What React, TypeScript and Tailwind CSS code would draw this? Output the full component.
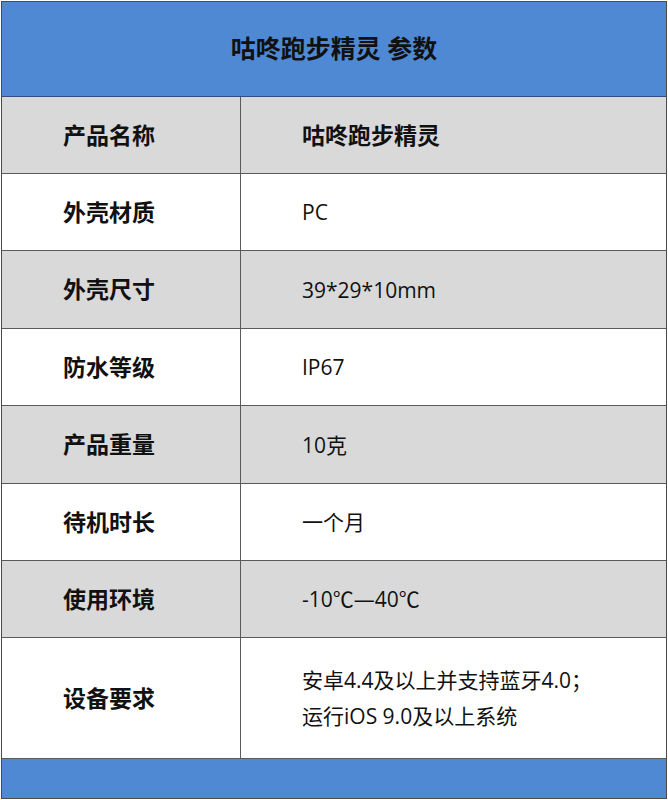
const rows: { label: string; value: string[]; bold?: boolean; h: string; gray: boolean }[] = [
  { label: '产品名称', value: ['咕咚跑步精灵'], bold: true, h: 'h-[77px]', gray: true },
  { label: '外壳材质', value: ['PC'], h: 'h-[77px]', gray: false },
  { label: '外壳尺寸', value: ['39*29*10mm'], h: 'h-[78px]', gray: true },
  { label: '防水等级', value: ['IP67'], h: 'h-[77px]', gray: false },
  { label: '产品重量', value: ['10克'], h: 'h-[78px]', gray: true },
  { label: '待机时长', value: ['一个月'], h: 'h-[77px]', gray: false },
  { label: '使用环境', value: ['-10℃—40℃'], h: 'h-[77px]', gray: true },
  {
    label: '设备要求',
    value: ['安卓4.4及以上并支持蓝牙4.0；', '运行iOS 9.0及以上系统'],
    h: 'h-[121px]',
    gray: false,
  },
];

export default function App() {
  return (
    <div
      className="h-[800px] w-[668px] bg-white pl-px pt-px"
      style={{ fontFamily: '"Open Sans", "Noto Sans CJK SC", sans-serif' }}
    >
      <div className="w-[666px] border border-[#4a4a4a]">
        {/* Title */}
        <div className="flex h-[95px] items-center justify-center border-b border-[#2f4f7f] bg-[#4f89d3]">
          <span className="text-[25px] font-bold text-[#111]">咕咚跑步精灵 参数</span>
        </div>

        {rows.map((r) => (
          <div
            key={r.label}
            className={`flex border-b border-[#5a5a5a] ${r.h} ${r.gray ? 'bg-[#d9d9d9]' : 'bg-white'}`}
          >
            <div className="flex w-[239px] items-center border-r border-[#5a5a5a] pl-[61px]">
              <span className="text-[23px] font-bold text-[#111]">{r.label}</span>
            </div>
            <div className="flex flex-1 flex-col justify-center pl-[61px]">
              {r.value.map((v) => (
                <span
                  key={v}
                  className={`leading-[36px] ${r.bold ? 'text-[23px] font-bold text-[#111]' : 'text-[21px] text-[#111]'}`}
                >
                  {v}
                </span>
              ))}
            </div>
          </div>
        ))}

        {/* Footer */}
        <div className="h-[39px] bg-[#4f89d3]" />
      </div>
    </div>
  );
}
